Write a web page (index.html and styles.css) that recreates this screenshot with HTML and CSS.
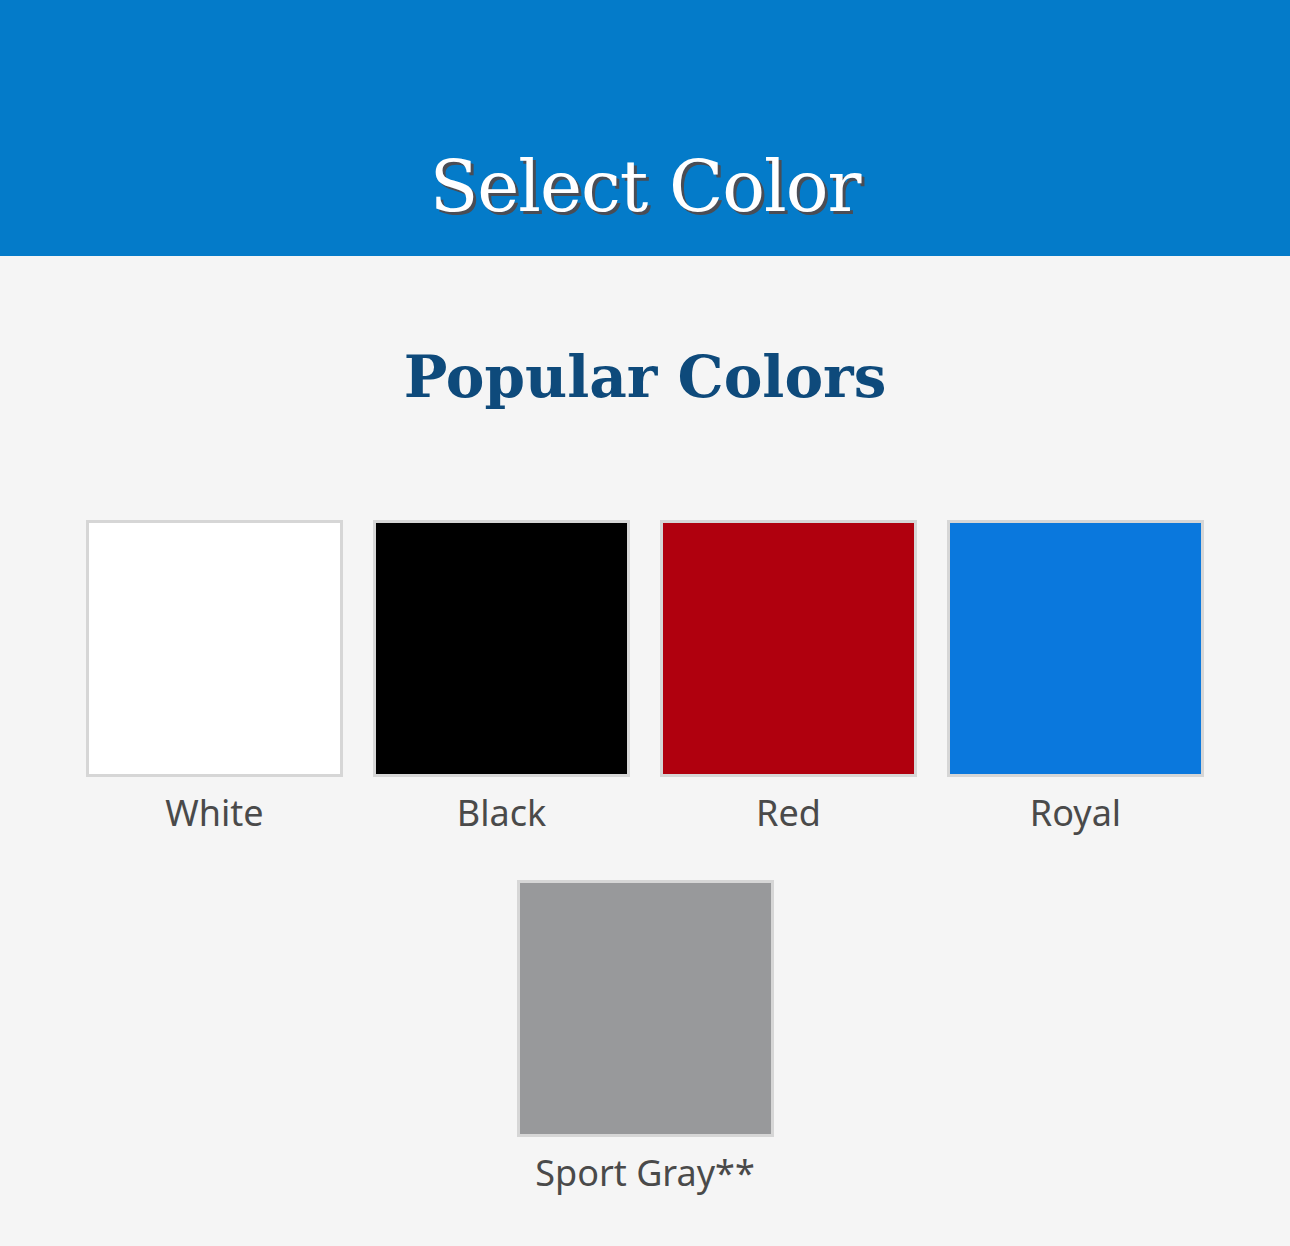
FILE: index.html
```html
<!DOCTYPE html>
<html lang="en">
<head>
    <meta charset="UTF-8">
    <title>Select Color</title>
    <link rel="stylesheet" href="styles.css">
</head>
<body>
<header class="page-header">
    <h1>Select Color</h1>
</header>

<main class="color-picker">
    <h2>Popular Colors</h2>
    <ul class="swatch-list">
        <li class="swatch">
            <span class="chip chip-white"></span>
            <span class="swatch-name">White</span>
        </li>
        <li class="swatch">
            <span class="chip chip-black"></span>
            <span class="swatch-name">Black</span>
        </li>
        <li class="swatch">
            <span class="chip chip-red"></span>
            <span class="swatch-name">Red</span>
        </li>
        <li class="swatch">
            <span class="chip chip-royal"></span>
            <span class="swatch-name">Royal</span>
        </li>
        <li class="swatch">
            <span class="chip chip-gray"></span>
            <span class="swatch-name">Sport Gray**</span>
        </li>
    </ul>
</main>
</body>
</html>
```

FILE: styles.css
```css
body {
  margin: 0;
  padding: 0;
  background-color: #f5f5f5;
  font-family: 'Noto Sans', 'Open Sans', sans-serif;
}

.page-header {
  background-color: #047bc9;
  height: 256px;
  display: flex;
  align-items: flex-end;
  justify-content: center;
}

.page-header h1 {
  margin: 0 0 34px;
  font-family: 'DejaVu Serif', serif;
  font-weight: normal;
  font-size: 71px;
  line-height: 1;
  color: #fff;
  text-shadow: 3px 3px 0 #4a4d55;
  letter-spacing: -1px;
}

.color-picker {
  padding-top: 92px;
  text-align: center;
}

.color-picker h2 {
  margin: 0;
  font-family: 'DejaVu Serif', serif;
  font-weight: bold;
  font-size: 58px;
  line-height: 1;
  color: #0e4a7b;
}

.swatch-list {
  list-style: none;
  margin: 114px auto 0;
  padding: 0;
  width: 1120px;
  display: flex;
  flex-wrap: wrap;
  justify-content: center;
  column-gap: 30px;
  row-gap: 41px;
}

.swatch {
  width: 257px;
  display: flex;
  flex-direction: column;
  align-items: center;
}

.chip {
  display: block;
  box-sizing: border-box;
  width: 257px;
  height: 257px;
  border: 3px solid #d6d6d6;
}

.chip-white { background-color: #fff; }
.chip-black { background-color: #000; }
.chip-red { background-color: #b0000e; }
.chip-royal { background-color: #0a78dd; }
.chip-gray { background-color: #98999b; }

.swatch-name {
  margin-top: 10px;
  font-size: 36px;
  line-height: 52px;
  color: #4a4a4a;
}
```
